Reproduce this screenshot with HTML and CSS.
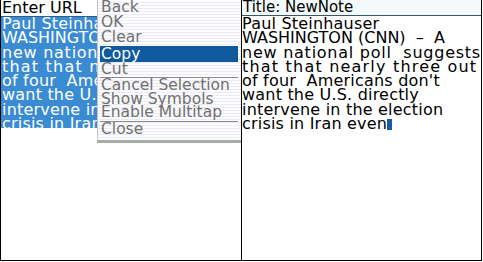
FILE: index.html
```html
<!DOCTYPE html>
<html>
<head>
<meta charset="utf-8">
<link rel="stylesheet" href="styles.css">
</head>
<body>
<div class="device">
  <section class="pane pane-left">
    <div class="hdr hdr-left">Enter URL</div>
    <div class="body sel"><div class="ln">Paul Steinhauser</div><div class="ln caps">WASHINGTON (CNN)  –  A</div><div class="ln wide">new national poll  suggests</div><div class="ln wider">that that nearly three out</div><div class="ln">of four  Americans don't</div><div class="ln">want the U.S. directly</div><div class="ln">intervene in the election</div><div class="ln">crisis in Iran even</div></div>
    <div class="menu">
      <div class="item">Back</div>
      <div class="item">OK</div>
      <div class="item">Clear</div>
      <div class="item active">Copy</div>
      <div class="item">Cut</div>
      <div class="sep"></div>
      <div class="item compact">Cancel Selection</div>
      <div class="item compact">Show Symbols</div>
      <div class="item compact">Enable Multitap</div>
      <div class="sep sep-low"></div>
      <div class="item">Close</div>
    </div>
  </section>
  <div class="divider"></div>
  <section class="pane pane-right">
    <div class="hdr hdr-right">Title: NewNote</div>
    <div class="body"><div class="ln">Paul Steinhauser</div><div class="ln caps">WASHINGTON (CNN)  –  A</div><div class="ln wide">new national poll  suggests</div><div class="ln wider">that that nearly three out</div><div class="ln">of four  Americans don't</div><div class="ln">want the U.S. directly</div><div class="ln">intervene in the election</div><div class="ln">crisis in Iran even<span class="cursor"></span></div></div>
  </section>
</div>
</body>
</html>
```

FILE: styles.css
```css
html, body {
  margin: 0;
  padding: 0;
  background: #ffffff;
}
body {
  font-family: "DejaVu Sans", sans-serif;
  color: #000;
}
.device {
  width: 480px;
  height: 260px;
  border-left: 1px solid #000;
  border-right: 1px solid #000;
  border-bottom: 1px solid #000;
  display: grid;
  grid-template-columns: 240px 1px 239px;
  overflow: hidden;
}
.divider {
  background: #000;
}
.pane {
  position: relative;
  overflow: hidden;
  display: flex;
  flex-direction: column;
}
.hdr {
  font-size: 16px;
  line-height: 16px;
  white-space: nowrap;
}
.hdr-left {
  height: 16px;
  padding-left: 1px;
  border-bottom: 1px solid #2d5d8a;
}
.hdr-right {
  height: 15px;
  font-size: 15px;
  line-height: 15px;
  padding-left: 1px;
  background: #f2fafb;
  border-bottom: 1px solid #3a5566;
}
.body {
  font-size: 16px;
  line-height: 14.3px;
  white-space: pre;
  letter-spacing: 0.2px;
}
.pane-right .body {
  padding-top: 1px;
}
.sel {
  background: #3a8bd2;
  color: #fff;
  padding-left: 1px;
  height: 111px;
}
.ln {
  height: 14.3px;
}
.ln.caps {
  letter-spacing: 0;
}
.ln.wide {
  letter-spacing: 0.75px;
}
.ln.wider {
  letter-spacing: 1.2px;
}
.cursor {
  display: inline-block;
  width: 5px;
  height: 11px;
  background: #1a5c9c;
  vertical-align: -1px;
}
.menu {
  position: absolute;
  left: 96px;
  top: 0;
  width: 144px;
  height: 143px;
  background: repeating-linear-gradient(180deg, #fcfcfe 0px, #fcfcfe 2px, #ebebf1 2px, #ebebf1 3px);
  border-left: 1px solid #c4c4c8;
  border-bottom: 3px solid #a6ada7;
  box-sizing: border-box;
  padding: 0 3px 0 2px;
  display: flex;
  flex-direction: column;
}
.item {
  font-size: 15.5px;
  line-height: 15px;
  height: 15px;
  color: #707070;
  padding-left: 1px;
  white-space: nowrap;
}
.item.active {
  background: #0f5a9e;
  color: #fff;
  height: 16px;
  line-height: 16px;
  margin-top: 1px;
}
.item.compact {
  height: 13.5px;
  line-height: 14px;
}
.sep {
  height: 1px;
  background: #8c8c8c;
  flex-shrink: 0;
}
.sep.sep-low {
  margin-top: 2px;
}
```
